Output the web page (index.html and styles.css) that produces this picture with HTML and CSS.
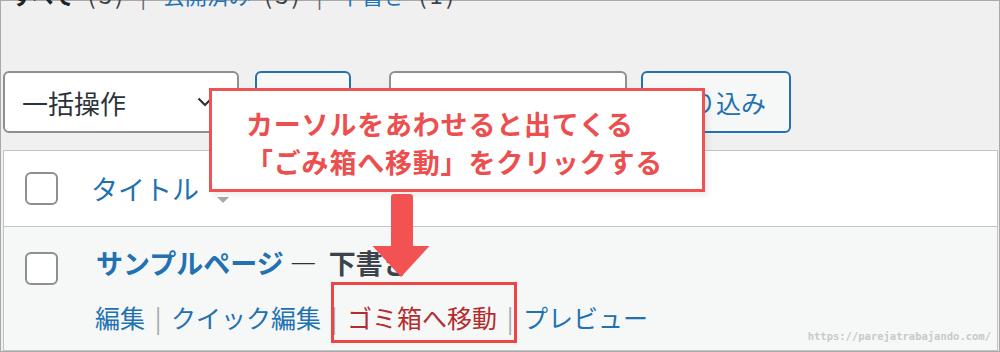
FILE: index.html
```html
<!DOCTYPE html>
<html lang="ja">
<head>
  <meta charset="UTF-8"/>
  <title>固定ページ一覧</title>
  <link rel="stylesheet" href="styles.css">
</head>
<body>
<div class="screen">
  <!-- ステータス絞り込み -->
  <ul class="subsubsub">
    <li class="current">すべて <span class="count">(3)</span></li>
    <li class="sep">|</li>
    <li><a href="#">公開済み</a> <span class="count">(3)</span></li>
    <li class="sep">|</li>
    <li><a href="#">下書き</a> <span class="count">(1)</span></li>
  </ul>

  <!-- 一括操作など -->
  <div class="tablenav">
    <div class="select bulk">
      <span>一括操作</span>
      <svg width="16" height="10" viewBox="0 0 16 10"><path d="M1.5 1.5l6.5 6.5 6.5-6.5" fill="none" stroke="#2c3338" stroke-width="2.2"/></svg>
    </div>
    <button class="btn apply">適用</button>
    <div class="select date"><span>すべての日付</span></div>
    <button class="btn filter">絞り込み</button>
  </div>

  <!-- 一覧 -->
  <div class="list">
    <div class="row head">
      <span class="cb"></span>
      <a href="#" class="col-title">タイトル</a>
      <span class="sort"></span>
    </div>
    <div class="row item">
      <span class="cb"></span>
      <div class="cell">
        <div class="title"><a href="#">サンプルページ</a><span class="dash">—</span><span class="state">下書き</span></div>
        <div class="actions">
          <a href="#">編集</a><span class="bar">|</span><a href="#">クイック編集</a><span class="bar">|</span><a href="#" class="trash">ゴミ箱へ移動</a><span class="bar">|</span><a href="#">プレビュー</a>
        </div>
      </div>
    </div>
  </div>

  <!-- 注釈 -->
  <div class="callout">
    <p>カーソルをあわせると出てくる</p>
    <p>「ごみ箱へ移動」をクリックする</p>
  </div>
  <svg class="arrow" width="58" height="83" viewBox="0 0 58 83"><path d="M22 0h16a3 3 0 0 1 3 3v49h16.5L29 83 0.5 52H19V3a3 3 0 0 1 3-3z" fill="#f25252"/></svg>
  <div class="mark"></div>
  <div class="credit">https://parejatrabajando.com/</div>
</div>
</body>
</html>
```

FILE: styles.css
```css
/* Reset */
* { box-sizing: border-box; margin: 0; padding: 0; }
html, body { width: 1000px; height: 352px; overflow: hidden; }
body {
  font-family: "Noto Sans CJK JP", "Noto Sans", sans-serif;
  background: #f0f0f1; color: #2c3338;
}
a { color: #2271b1; text-decoration: none; }

.screen {
  position: relative;
  display: flex; flex-direction: column;
  height: 352px;
  border: 1px solid #a9a9a9;
  padding: 0 1px 0 2px;
}

/* ステータス */
.subsubsub {
  list-style: none; display: flex;
  font-size: 22px; line-height: 30px;
  margin-top: -22px; padding-left: 8px;
}
.subsubsub .current { color: #1d2327; font-weight: 700; }
.subsubsub .count {
  color: #3c434a; font-weight: 400;
  font-size: 24px; letter-spacing: 3px;
  margin-left: 8px;
}
.subsubsub .sep { color: #646970; margin: 0 17px 0 14px; }

/* 操作バー */
.tablenav {
  display: flex; height: 62px;
  margin-top: 62px; flex: none;
}
.select, .btn {
  height: 62px; border-radius: 6px;
  font-family: inherit; font-size: 25px;
  display: flex; align-items: center;
}
.select {
  background: #fff; border: 2px solid #8c8f94;
  color: #2c3338; font-size: 26px;
  justify-content: space-between;
  padding: 0 24px 0 17px;
}
.bulk { width: 236px; }
.date { width: 238px; margin-left: 38px; }
.btn {
  background: #f6f7f7; color: #2271b1;
  border: 2px solid #2271b1;
  justify-content: center;
}
.apply { width: 96px; margin-left: 16px; }
.filter { width: 150px; margin-left: 14px; }

/* 一覧テーブル */
.list {
  flex: 1; margin-top: 17px;
  display: flex; flex-direction: column;
  border: 1px solid #c3c4c7; background: #fff;
}
.row { display: flex; padding-left: 21px; }
.cb {
  flex: none; width: 33px; height: 33px;
  border: 2px solid #8c8f94; border-radius: 6px;
  background: #fff;
}
.head {
  height: 76px; align-items: center;
  border-bottom: 1px solid #c3c4c7;
}
.col-title { margin-left: 33px; font-size: 27px; line-height: 36px; }
.sort {
  width: 0; height: 0; margin: 22px 0 0 18px;
  border-left: 6.5px solid transparent;
  border-right: 6.5px solid transparent;
  border-top: 6px solid #a7aaad;
}
.item {
  flex: 1; background: #f6f7f7;
  align-items: flex-start; padding-top: 18px;
}
.item .cb { margin-top: 7px; }
.cell { margin-left: 38px; }
.title { font-size: 27px; line-height: 36px; font-weight: 700; color: #3c434a; }
.dash { margin: 0 12px 0 6px; color: #2c3338; }
.actions {
  margin: 18px 0 0 -1px;
  font-size: 25px; line-height: 36px;
  display: flex;
}
.bar { width: 26px; text-align: center; color: #a7aaad; }
.trash { color: #b32d2e; }

/* 注釈 */
.callout {
  position: absolute; left: 208px; top: 87px;
  width: 496px; height: 104px;
  border: 3px solid #ec5454; background: #fff;
  padding: 14px 0 0 34px;
  color: #ec4f4f; font-size: 27px; font-weight: 700;
  line-height: 38px; letter-spacing: 0.8px;
  box-shadow: 3px 3px 6px rgba(0, 0, 0, 0.08);
}
.arrow { position: absolute; left: 371px; top: 193px; }
.mark {
  position: absolute; left: 330px; top: 281px;
  width: 186px; height: 61px;
  border: 3px solid #ee4646;
}
.credit {
  position: absolute; right: 8px; top: 328px;
  font-family: "DejaVu Sans Mono", monospace;
  font-size: 10.5px; font-weight: 700; line-height: 14px;
  color: #c9c9c9;
}
```
